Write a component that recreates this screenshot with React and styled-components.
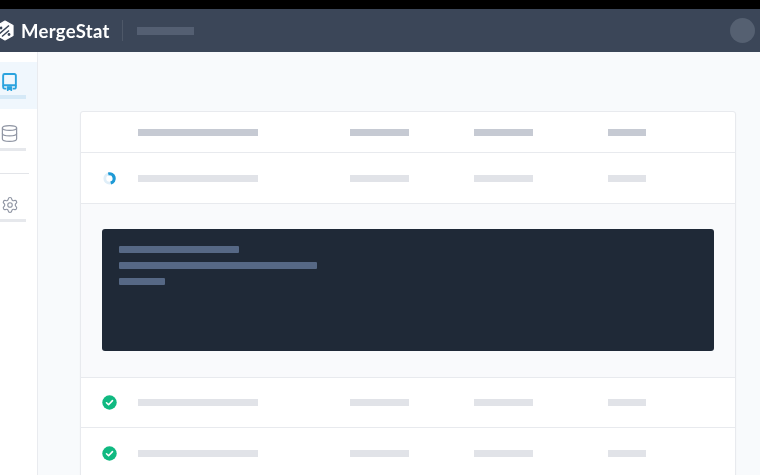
import React from "react";
import styled, { createGlobalStyle } from "styled-components";
import { Database, Settings } from "lucide-react";

const Global = createGlobalStyle`
  html, body { margin: 0; padding: 0; background: #000; }
  body { font-family: "Lato", "Liberation Sans", sans-serif; }
`;

const Page = styled.div`
  width: 760px;
  height: 475px;
  overflow: hidden;
  display: flex;
  flex-direction: column;
  padding-top: 9px;
  box-sizing: border-box;
  background: #000;
  filter: blur(0.45px);
`;

const Header = styled.header`
  flex: 0 0 43px;
  display: flex;
  align-items: center;
  padding-right: 5px;
  background: #3b4658;
  box-sizing: border-box;
`;

const Logo = styled.svg`
  width: 18px;
  height: 21px;
  margin-left: -4px;
  flex: none;
`;

const Brand = styled.span`
  margin-left: 7px;
  color: #fff;
  font-size: 18.5px;
  font-weight: 700;
  letter-spacing: 0.32px;
`;

const HeaderDivider = styled.span`
  width: 1px;
  height: 21px;
  margin-left: 12px;
  background: #4e5868;
`;

const Crumb = styled.span`
  width: 57px;
  height: 8px;
  margin-left: 14px;
  background: #545f72;
`;

const Avatar = styled.span`
  width: 25px;
  height: 25px;
  margin-left: auto;
  border-radius: 50%;
  background: #556071;
`;

const Body = styled.div`
  flex: 1;
  display: flex;
  min-height: 0;
`;

const Sidebar = styled.nav`
  flex: 0 0 38px;
  box-sizing: border-box;
  padding-top: 10px;
  background: #fff;
  border-right: 1px solid #e9ebef;
`;

const NavItem = styled.div`
  height: ${(p) => p.$height}px;
  box-sizing: border-box;
  padding-top: ${(p) => p.$top}px;
  background: ${(p) => (p.$active ? "#f0f7fd" : "transparent")};
  color: ${(p) => (p.$active ? "#2ba3de" : "#8f95a3")};
  svg { display: block; margin-left: ${(p) => p.$left}px; }
`;

const NavLabel = styled.div`
  width: 26px;
  height: ${(p) => (p.$active ? 4 : 3)}px;
  margin-top: ${(p) => p.$gap}px;
  background: ${(p) => (p.$active ? "#d5e9f7" : "#e6e8ec")};
`;

const NavDivider = styled.div`
  width: 29px;
  height: 1px;
  margin-top: 22px;
  background: #e3e5e9;
`;

const Main = styled.main`
  flex: 1;
  min-width: 0;
  box-sizing: border-box;
  padding: 59px 24px 0 42px;
  background: #f8fafc;
`;

const Card = styled.section`
  background: #fff;
  border: 1px solid #e8eaee;
  border-radius: 3px;
  box-shadow: 0 1px 2px rgba(30, 40, 60, 0.04);
`;

const Row = styled.div`
  height: ${(p) => p.$height}px;
  display: grid;
  grid-template-columns: 57px 212px 124px 134px 1fr;
  align-items: center;
  border-bottom: 1px solid #e8eaee;
`;

const IconCell = styled.div`
  padding-left: 21px;
  display: flex;
`;

const Bar = styled.span`
  display: block;
  height: 7px;
  width: ${(p) => p.$w}px;
  background: ${(p) => (p.$head ? "#c6cad3" : "#e1e3e8")};
`;

const Expanded = styled.div`
  height: 174px;
  box-sizing: border-box;
  padding: 25px 21px 0;
  background: #f9fafc;
  border-bottom: 1px solid #e8eaee;
`;

const Console = styled.div`
  height: 122px;
  box-sizing: border-box;
  padding: 17px;
  display: flex;
  flex-direction: column;
  gap: 9px;
  background: #1f2937;
  border-radius: 3px;
`;

const ConsoleLine = styled.span`
  display: block;
  height: 7px;
  width: ${(p) => p.$w}px;
  background: #566885;
  border-radius: 1px;
`;

const Icon = styled.svg`
  width: 15px;
  height: 15px;
  display: block;
`;

const COLS = [{ w: 120 }, { w: 59 }, { w: 59 }, { w: 38 }];

const Spinner = () => (
  <Icon viewBox="0 0 16 16" fill="none">
    <circle cx="8" cy="8" r="5" stroke="#dfeef8" strokeWidth="3" />
    <path d="M8 3a5 5 0 0 1 0 10" stroke="#1e9ad6" strokeWidth="3.4" transform="rotate(-15 8 8)" />
  </Icon>
);

const Check = () => (
  <Icon viewBox="0 0 16 16">
    <circle cx="8" cy="8" r="7.7" fill="#10b981" />
    <path d="M4.8 8.3l2.2 2.1 4.2-4.4" fill="none" stroke="#fff" strokeWidth="1.7" strokeLinecap="round" strokeLinejoin="round" />
  </Icon>
);

const RepoIcon = () => (
  <svg width="15" height="18" viewBox="0 0 14 17" fill="none" stroke="currentColor" strokeWidth="1.8" strokeLinejoin="round">
    <path d="M2.4 1h9.2A1.4 1.4 0 0 1 13 2.4V11.5H1V2.4A1.4 1.4 0 0 1 2.4 1z" />
    <path d="M1 11.5v2A1.4 1.4 0 0 0 2.4 14.8H4M10 14.8h1.6A1.4 1.4 0 0 0 13 13.4V11.5" />
    <path d="M5 13h4v3.6l-2-1.2-2 1.2z" fill="currentColor" strokeWidth="1" />
  </svg>
);

const TableRow = ({ icon, head, height }) => (
  <Row $height={height}>
    <IconCell>{icon}</IconCell>
    {COLS.map((c, i) => (
      <Bar key={i} $w={c.w} $head={head} />
    ))}
  </Row>
);

export default function App() {
  return (
    <Page>
      <Global />
      <Header>
        <Logo viewBox="0 0 18 21">
          <path d="M9 1l8 4.6v9.8L9 20l-8-4.6V5.6z" fill="#fff" stroke="#fff" strokeWidth="1.2" strokeLinejoin="round" />
          <g stroke="#3b4658" strokeWidth="1.5" fill="none">
            <path d="M3 14L13 5.5M6 16.5l7-6" />
          </g>
          <circle cx="5" cy="8" r="1.4" fill="#3b4658" />
          <circle cx="13" cy="14.5" r="1.4" fill="#3b4658" />
        </Logo>
        <Brand>MergeStat</Brand>
        <HeaderDivider />
        <Crumb />
        <Avatar />
      </Header>
      <Body>
        <Sidebar>
          <NavItem $active $height={47} $top={11} $left={2}>
            <RepoIcon />
            <NavLabel $active $gap={4} />
          </NavItem>
          <NavItem $height={65} $top={15} $left={0}>
            <Database size={19} strokeWidth={1.5} />
            <NavLabel $gap={5} />
            <NavDivider />
          </NavItem>
          <NavItem $height={60} $top={22} $left={1}>
            <Settings size={18} strokeWidth={1.5} />
            <NavLabel $gap={5} />
          </NavItem>
        </Sidebar>
        <Main>
          <Card>
            <TableRow head height={40} />
            <TableRow icon={<Spinner />} height={50} />
            <Expanded>
              <Console>
                <ConsoleLine $w={120} />
                <ConsoleLine $w={198} />
                <ConsoleLine $w={46} />
              </Console>
            </Expanded>
            <TableRow icon={<Check />} height={49} />
            <TableRow icon={<Check />} height={50} />
          </Card>
        </Main>
      </Body>
    </Page>
  );
}
